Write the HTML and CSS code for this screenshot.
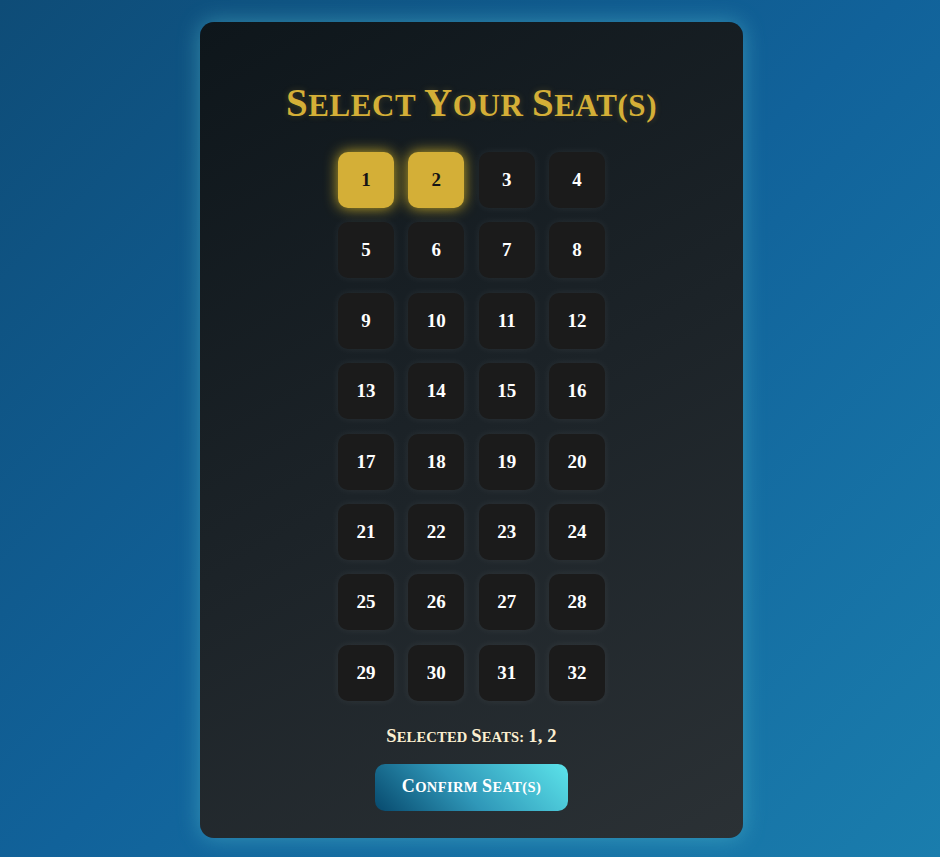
FILE: index.html
```html
<!DOCTYPE html>
<html lang="en">
<head>
<meta charset="utf-8">
<title>Select Your Seat(s)</title>
<link rel="stylesheet" href="styles.css">
</head>
<body>
<main class="card">
  <h1 class="title"><span class="cap">S</span>elect <span class="cap">Y</span>our <span class="cap">S</span>eat(s)</h1>
  <div class="seats">
    <div class="seat selected">1</div>
    <div class="seat selected">2</div>
    <div class="seat">3</div>
    <div class="seat">4</div>
    <div class="seat">5</div>
    <div class="seat">6</div>
    <div class="seat">7</div>
    <div class="seat">8</div>
    <div class="seat">9</div>
    <div class="seat">10</div>
    <div class="seat">11</div>
    <div class="seat">12</div>
    <div class="seat">13</div>
    <div class="seat">14</div>
    <div class="seat">15</div>
    <div class="seat">16</div>
    <div class="seat">17</div>
    <div class="seat">18</div>
    <div class="seat">19</div>
    <div class="seat">20</div>
    <div class="seat">21</div>
    <div class="seat">22</div>
    <div class="seat">23</div>
    <div class="seat">24</div>
    <div class="seat">25</div>
    <div class="seat">26</div>
    <div class="seat">27</div>
    <div class="seat">28</div>
    <div class="seat">29</div>
    <div class="seat">30</div>
    <div class="seat">31</div>
    <div class="seat">32</div>
  </div>
  <p class="selected-text"><span class="cap">S</span>elected <span class="cap">S</span>eats: <span class="cap">1, 2</span></p>
  <button class="confirm"><span class="cap">C</span>onfirm <span class="cap">S</span>eat(s)</button>
</main>
</body>
</html>
```

FILE: styles.css
```css
* { box-sizing: border-box; }
html, body { height: 100%; }
body {
  margin: 0;
  font-family: "Liberation Serif", "DejaVu Serif", serif;
  background: linear-gradient(135deg, #0e4c77 0%, #11629a 50%, #1a7dad 100%);
  display: flex;
  justify-content: center;
  align-items: flex-start;
  padding-top: 22px;
}
.card {
  width: 543px;
  height: 816px;
  margin-left: 3px;
  border-radius: 14px;
  background: linear-gradient(150deg, #0e161b 0%, #1c2328 50%, #2b3135 100%);
  box-shadow: 0 0 22px rgba(95, 205, 215, 0.45);
  display: flex;
  flex-direction: column;
  align-items: center;
  padding-top: 60px;
}
.cap { line-height: 1; }
.title {
  margin: 0;
  height: 48px;
  font-size: 31px;
  line-height: 48px;
  font-weight: 700;
  text-transform: uppercase;
  color: #d4af37;
  text-shadow: 0 0 6px rgba(212, 175, 55, 0.25);
  letter-spacing: 0.6px;
}
.title .cap { font-size: 39px; }
.seats {
  margin-top: 22px;
  display: grid;
  grid-template-columns: repeat(4, 56px);
  grid-auto-rows: 56px;
  gap: 14.4px;
}
.seat {
  background: #1b1b1b;
  border-radius: 10px;
  color: #ffffff;
  font-weight: 700;
  font-size: 19px;
  display: flex;
  align-items: center;
  justify-content: center;
  box-shadow: 0 0 9px rgba(255, 255, 255, 0.07);
}
.seat.selected {
  background: #d4af37;
  color: #141414;
  box-shadow: 0 0 14px rgba(230, 195, 40, 0.85);
}
.selected-text {
  margin: 25px 0 0;
  height: 22px;
  font-size: 14.5px;
  line-height: 22px;
  font-weight: 700;
  text-transform: uppercase;
  color: #fbefd0;
  letter-spacing: 0.2px;
}
.selected-text .cap { font-size: 18.5px; }
.confirm {
  margin-top: 16px;
  width: 193px;
  height: 47px;
  border: none;
  border-radius: 10px;
  background: linear-gradient(45deg, #07496d 0%, #2f97b8 45%, #5ce3ea 100%);
  color: #ffffff;
  font-family: "Liberation Serif", "DejaVu Serif", serif;
  font-size: 14.5px;
  line-height: 20px;
  font-weight: 700;
  text-transform: uppercase;
  letter-spacing: 0.4px;
  cursor: pointer;
}
.confirm .cap { font-size: 18px; }
```
